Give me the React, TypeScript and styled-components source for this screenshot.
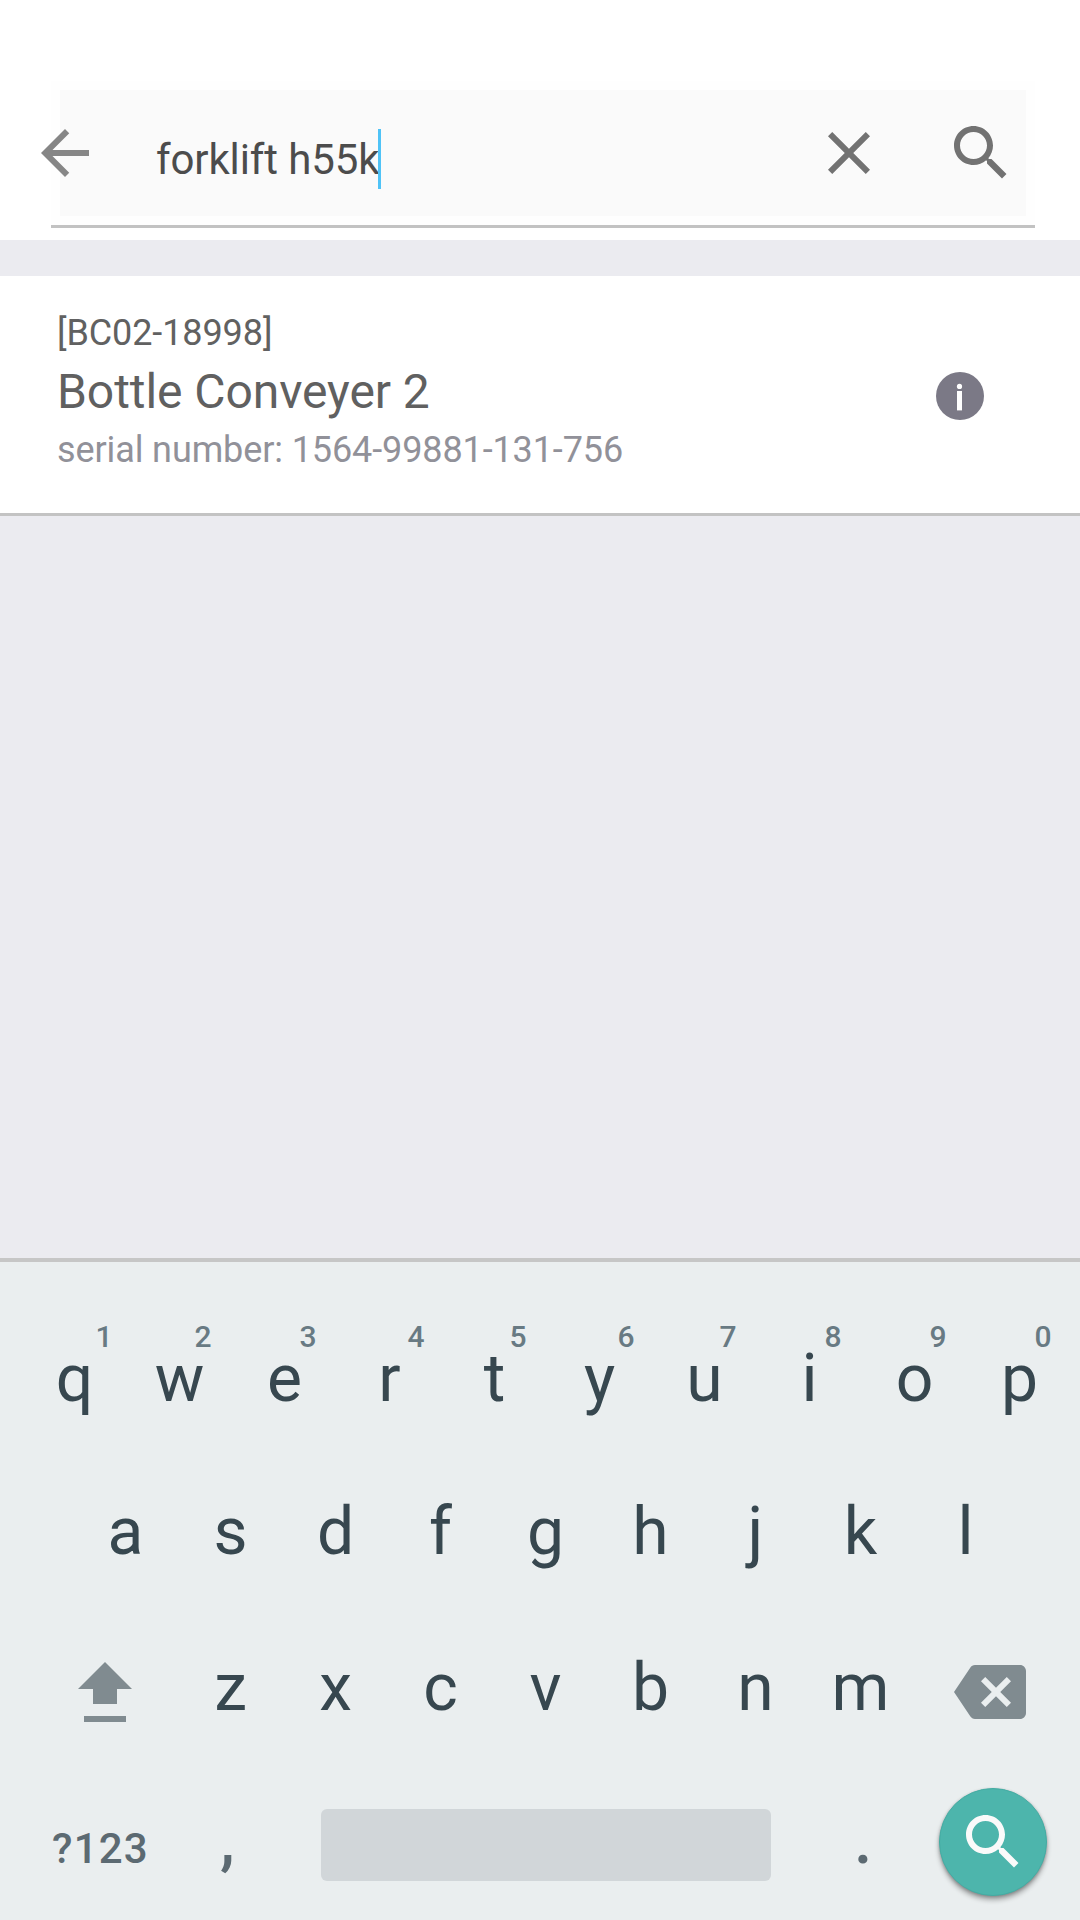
import React from "react";
import styled, { createGlobalStyle } from "styled-components";

const GlobalStyle = createGlobalStyle`
  html, body {
    margin: 0;
    padding: 0;
  }
  body {
    font-family: Roboto, "Noto Sans", sans-serif;
    background: #ebebf0;
  }
  *, *::before, *::after {
    box-sizing: border-box;
  }
`;

const Screen = styled.main`
  display: flex;
  flex-direction: column;
  width: 1080px;
  height: 1920px;
  overflow: hidden;
  background: #ebebf0;
`;

const Header = styled.header`
  flex: none;
  height: 240px;
  padding: 81px 45px 0 51px;
  background: #ffffff;
`;

const FieldFrame = styled.div`
  padding: 9px;
  height: 147px;
  background: #fefefe;
  border-bottom: 3px solid #c2c2c2;
`;

const Field = styled.div`
  display: flex;
  align-items: center;
  height: 126px;
  padding-right: 9px;
  background: #fafafa;
`;

const IconButton = styled.button<{ $left?: number; $color: string }>`
  flex: none;
  display: block;
  width: 72px;
  height: 72px;
  margin: 0 0 0 ${(p) => p.$left ?? 0}px;
  padding: 0;
  border: 0;
  background: none;
  color: ${(p) => p.$color};
`;

const Glyph = styled.svg`
  display: block;
  width: 72px;
  height: 72px;
  fill: currentColor;
`;

const Query = styled.div`
  flex: 1;
  display: flex;
  align-items: center;
  height: 60px;
  margin: 12px 0 0 55px;
  font-size: 42px;
  letter-spacing: -0.12px;
  line-height: 60px;
  color: #4c4c4c;
  white-space: pre;
`;

const QueryText = styled.span`
  padding-top: 2px;
`;

const Caret = styled.span`
  width: 3px;
  height: 60px;
  margin-left: -1px;
  background: #4fc3f7;
`;

const Results = styled.section`
  flex: 1;
  padding-top: 36px;
`;

const ResultRow = styled.article`
  display: flex;
  align-items: center;
  justify-content: space-between;
  height: 240px;
  padding: 0 96px 0 57px;
  background: #ffffff;
  border-bottom: 3px solid #c3c3c3;
`;

const ResultText = styled.div`
  display: flex;
  flex-direction: column;
  margin-bottom: 8px;
  white-space: nowrap;
`;

const AssetCode = styled.span`
  font-size: 36px;
  letter-spacing: -0.1px;
  line-height: 56px;
  color: #616161;
`;

const AssetName = styled.span`
  font-size: 48px;
  letter-spacing: -0.07px;
  line-height: 62px;
  color: #606060;
`;

const Serial = styled.span`
  font-size: 36px;
  letter-spacing: -0.11px;
  line-height: 54px;
  color: #919199;
`;

const InfoGlyph = styled.svg`
  display: block;
  width: 48px;
  height: 48px;
  margin-top: 3px;
`;

const Keyboard = styled.section`
  flex: none;
  height: 662px;
  background: #eaeeef;
  border-top: 4px solid #c6c6c6;
  padding-top: 45px;
`;

const KeyRow = styled.div<{ $indent: number; $height: number }>`
  display: flex;
  height: ${(p) => p.$height}px;
  padding-left: ${(p) => p.$indent}px;
`;

const Key = styled.div`
  position: relative;
  flex: none;
  width: 105px;
  text-align: center;
  font-size: 66px;
  line-height: 144px;
  color: #37474f;
`;

const Hint = styled.span<{ $shift: number }>`
  position: absolute;
  top: 12px;
  left: ${(p) => 67.5 + p.$shift}px;
  font-size: 30px;
  font-weight: 500;
  line-height: 36px;
  color: #687a83;
`;

const ModifierKey = styled.div<{ $width: number; $top: number }>`
  flex: none;
  display: flex;
  justify-content: center;
  width: ${(p) => p.$width}px;
  padding-top: ${(p) => p.$top}px;
  color: #808b90;
`;

const BottomRow = styled.div`
  display: flex;
  align-items: center;
  height: 120px;
  padding: 0 33px 0 52px;
`;

const SymbolsKey = styled.div`
  flex: none;
  width: 168px;
  padding-top: 13px;
  font-size: 42px;
  font-weight: 500;
  letter-spacing: 1.2px;
  color: #5c6a72;
`;

const Punctuation = styled.div<{ $width: number; $left?: number }>`
  flex: none;
  width: ${(p) => p.$width}px;
  margin-left: ${(p) => p.$left ?? 0}px;
  margin-bottom: 3px;
  font-size: 66px;
  font-weight: 500;
  line-height: 72px;
  color: #5c6a72;
`;

const SpaceBar = styled.div`
  flex: none;
  width: 450px;
  height: 72px;
  margin-top: 6px;
  border-radius: 6px;
  background: #d1d6d9;
`;

const SearchAction = styled.button`
  flex: none;
  display: flex;
  align-items: center;
  justify-content: center;
  width: 108px;
  height: 108px;
  margin: 0 0 0 auto;
  padding: 0;
  border: 1px solid #43aca3;
  border-radius: 50%;
  background: #4db5ac;
  color: #fafafa;
  box-shadow: 0 4px 5px rgba(0, 0, 0, 0.3), 0 1px 3px rgba(0, 0, 0, 0.2);
`;

const SearchGlyph = () => (
  <Glyph viewBox="0 0 24 24">
    <path d="M15.5 14h-.79l-.28-.27C15.41 12.59 16 11.11 16 9.5 16 5.91 13.09 3 9.5 3S3 5.91 3 9.5 5.91 16 9.5 16c1.61 0 3.09-.59 4.23-1.57l.27.28v.79l5 4.99L20.49 19l-4.99-5zm-6 0C7.01 14 5 11.99 5 9.5S7.01 5 9.5 5 14 7.01 14 9.5 11.99 14 9.5 14z" />
  </Glyph>
);

const topKeys: { letter: string; hint: string; shift: number }[] = [
  { letter: "q", hint: "1", shift: 6 },
  { letter: "w", hint: "2", shift: 0 },
  { letter: "e", hint: "3", shift: 0 },
  { letter: "r", hint: "4", shift: 3 },
  { letter: "t", hint: "5", shift: 0 },
  { letter: "y", hint: "6", shift: 3 },
  { letter: "u", hint: "7", shift: 0 },
  { letter: "i", hint: "8", shift: 0 },
  { letter: "o", hint: "9", shift: 0 },
  { letter: "p", hint: "0", shift: 0 },
];

export default function App() {
  return (
    <>
      <GlobalStyle />
      <Screen>
        <Header>
          <FieldFrame>
            <Field>
              <IconButton $left={-31} $color="#868686" aria-label="Back">
                <Glyph viewBox="0 0 24 24">
                  <path d="M20 11H7.83l5.59-5.59L12 4l-8 8 8 8 1.41-1.41L7.83 13H20v-2z" />
                </Glyph>
              </IconButton>
              <Query>
                <QueryText>forklift h55k</QueryText>
                <Caret />
              </Query>
              <IconButton $color="#727272" aria-label="Clear">
                <Glyph viewBox="0 0 24 24">
                  <path d="M19 6.41L17.59 5 12 10.59 6.41 5 5 6.41 10.59 12 5 17.59 6.41 19 12 13.41 17.59 19 19 17.59 13.41 12z" />
                </Glyph>
              </IconButton>
              <IconButton $left={60} $color="#727272" aria-label="Search">
                <SearchGlyph />
              </IconButton>
            </Field>
          </FieldFrame>
        </Header>

        <Results>
          <ResultRow>
            <ResultText>
              <AssetCode>[BC02-18998]</AssetCode>
              <AssetName>Bottle Conveyer 2</AssetName>
              <Serial>serial number: 1564-99881-131-756</Serial>
            </ResultText>
            <InfoGlyph viewBox="0 0 48 48">
              <circle cx="24" cy="24" r="24" fill="#7b7986" />
              <circle cx="23.5" cy="14.4" r="2.6" fill="#fff" />
              <rect x="21" y="19" width="5" height="19.4" fill="#fff" />
            </InfoGlyph>
          </ResultRow>
        </Results>

        <Keyboard>
          <KeyRow $indent={22} $height={153}>
            {topKeys.map((k) => (
              <Key key={k.letter}>
                {k.letter}
                <Hint $shift={k.shift}>{k.hint}</Hint>
              </Key>
            ))}
          </KeyRow>
          <KeyRow $indent={73} $height={156}>
            {"asdfghjkl".split("").map((c) => (
              <Key key={c}>{c}</Key>
            ))}
          </KeyRow>
          <KeyRow $indent={32} $height={166}>
            <ModifierKey $width={146} $top={46}>
              <Glyph viewBox="0 0 72 72">
                <path d="M36 0 63 27H48V42H24V27H9zM15 54H57V60H15z" />
              </Glyph>
            </ModifierKey>
            {"zxcvbnm".split("").map((c) => (
              <Key key={c}>{c}</Key>
            ))}
            <ModifierKey $width={154} $top={40}>
              <Glyph viewBox="0 0 24 24">
                <path d="M22 3H7c-.69 0-1.23.35-1.59.88L0 12l5.41 8.11c.36.53.9.89 1.59.89h15c1.1 0 2-.9 2-2V5c0-1.1-.9-2-2-2zm-3 12.59L17.59 17 14 13.41 10.41 17 9 15.59 12.59 12 9 8.41 10.41 7 14 10.59 17.59 7 19 8.41 15.41 12 19 15.59z" />
              </Glyph>
            </ModifierKey>
          </KeyRow>
          <BottomRow>
            <SymbolsKey>?123</SymbolsKey>
            <Punctuation $width={101}>,</Punctuation>
            <SpaceBar />
            <Punctuation $width={40} $left={83}>.</Punctuation>
            <SearchAction aria-label="Search">
              <SearchGlyph />
            </SearchAction>
          </BottomRow>
        </Keyboard>
      </Screen>
    </>
  );
}
